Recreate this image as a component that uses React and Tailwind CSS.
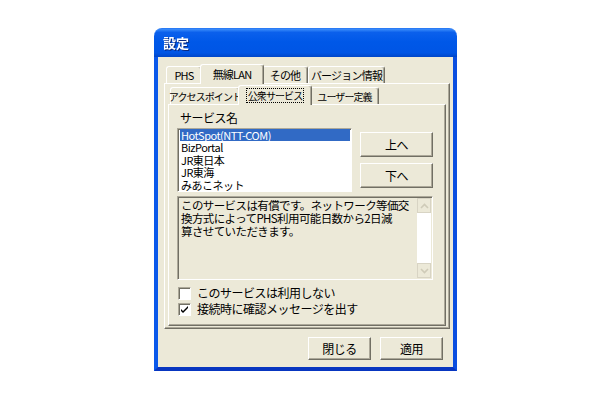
import React from 'react';

const jp = { fontFamily: '"MS UI Gothic", "Noto Sans CJK JP", "DejaVu Sans", sans-serif' };

function Tab({ label, selected, width, focus }) {
  if (selected) {
    return (
      <div
        className={`relative z-10 -mx-[2px] -mb-px h-[20px] ${width} flex items-center justify-center whitespace-nowrap bg-[#ECE9D8] border-t border-l border-white border-r border-r-[#716F64] rounded-t-[3px] shadow-[inset_-1px_0_0_#ACA899]`}
      >
        <span className={focus ? 'px-[1px] leading-[13px] outline-1 outline-dotted outline-black' : ''}>{label}</span>
      </div>
    );
  }
  return (
    <div
      className={`h-[17px] ${width} flex items-center justify-center whitespace-nowrap bg-[#ECE9D8] border-t border-l border-white border-r border-r-[#716F64] rounded-t-[3px] shadow-[inset_-1px_0_0_#ACA899]`}
    >
      {label}
    </div>
  );
}

function Button({ children, className }) {
  return (
    <div
      className={`flex items-center justify-center bg-[#ECE9D8] border border-t-white border-l-white border-r-[#716F64] border-b-[#716F64] shadow-[inset_-1px_-1px_0_#ACA899] ${className}`}
    >
      {children}
    </div>
  );
}

function Checkbox({ checked, label }) {
  return (
    <div className="flex items-center h-[16px]">
      <div className="w-[13px] h-[13px] bg-white border border-t-[#ACA899] border-l-[#ACA899] border-r-white border-b-white shadow-[inset_1px_1px_0_#716F64] flex items-center justify-center">
        {checked && (
          <svg width="9" height="9" viewBox="0 0 9 9">
            <path d="M1 4 L3 6 L8 1 L8 3 L3 8 L1 6 Z" fill="#000" />
          </svg>
        )}
      </div>
      <span className="ml-[6px] whitespace-nowrap">{label}</span>
    </div>
  );
}

function ScrollBtn({ up }) {
  return (
    <div className="w-[14px] h-[15px] bg-[#ECE9D8] border border-[#D8D4C4] flex items-center justify-center">
      <svg width="9" height="6" viewBox="0 0 9 6">
        <path d={up ? 'M1 5 L4.5 1.5 L8 5' : 'M1 1 L4.5 4.5 L8 1'} stroke="#CFCBB8" strokeWidth="1.6" fill="none" />
      </svg>
    </div>
  );
}

export default function App() {
  const items = ['HotSpot(NTT-COM)', 'BizPortal', 'JR東日本', 'JR東海', 'みあこネット'];

  return (
    <div className="w-[610px] h-[400px] bg-white pt-[28px] pl-[154px] text-[12px] text-black tracking-[-0.5px]" style={jp}>
      <div className="w-[303px] h-[343px] flex flex-col">
        {/* title bar */}
        <div className="h-[29px] rounded-t-[8px] bg-[linear-gradient(180deg,#3C8EFB_0%,#0B60EC_12%,#0058E8_45%,#0055E5_85%,#0046C8_100%)] border-t border-[#2A7BF5] flex items-center pl-[9px]">
          <span className="text-white font-bold text-[13px] tracking-normal drop-shadow-[1px_1px_0_#0A2A80]">設定</span>
        </div>

        {/* body */}
        <div className="flex-1 bg-[#ECE9D8] border-l-4 border-r-4 border-b-4 border-l-[#0A58EA] border-r-[#0A4EE0] border-b-[#0836C0] flex flex-col">
          {/* outer tab control */}
          <div className="pl-[6px] pt-[7px] pr-[3px]">
            <div className="flex items-end h-[19px] pl-[2px] text-[11px] tracking-[-0.8px]">
              <Tab label="PHS" width="w-[36px]" />
              <Tab label="無線LAN" width="w-[64px]" selected />
              <Tab label="その他" width="w-[46px]" />
              <Tab label="バージョン情報" width="w-[77px]" />
            </div>
            <div className="h-[246px] border-t border-l border-white border-r border-b border-r-[#716F64] border-b-[#716F64] shadow-[inset_-1px_-1px_0_#ACA899] pl-[3px] pr-[3px] pt-[2px]">
              {/* inner tab control */}
              <div className="flex items-end h-[18px] pl-[2px] text-[10px] tracking-[-0.9px]">
                <Tab label="アクセスポイント" width="w-[70px]" />
                <Tab label="公衆サービス" width="w-[74px]" selected focus />
                <Tab label="ユーザー定義" width="w-[69px]" />
              </div>
              <div className="h-[222px] border-t border-l border-white border-r border-b border-r-[#716F64] border-b-[#716F64] shadow-[inset_-1px_-1px_0_#ACA899] pl-[8px] pt-[6px]">
                <div className="pl-[3px] leading-[14px] h-[16px]">サービス名</div>
                <div className="flex mt-[1px]">
                  <div className="w-[175px] h-[64px] bg-white border border-t-[#ACA899] border-l-[#ACA899] border-r-white border-b-white shadow-[inset_1px_1px_0_#716F64] pl-[2px] pr-[1px] overflow-hidden text-[11px]">
                    {items.map((it, i) => (
                      <div
                        key={it}
                        className={`h-[12.4px] leading-[12.4px] pl-[1px] whitespace-nowrap ${i === 0 ? 'bg-[#316AC5] text-white' : ''}`}
                      >
                        {it}
                      </div>
                    ))}
                  </div>
                  <div className="ml-[8px] flex flex-col gap-[6px] pt-[4px]">
                    <Button className="w-[73px] h-[25px]">上へ</Button>
                    <Button className="w-[73px] h-[25px]">下へ</Button>
                  </div>
                </div>
                <div className="mt-[4px] w-[256px] h-[84px] border border-t-[#ACA899] border-l-[#ACA899] border-r-white border-b-white shadow-[inset_1px_1px_0_#716F64] flex">
                  <div className="flex-1 pl-[3px] pt-[2px] leading-[13px] whitespace-nowrap text-[11.5px] tracking-[-0.6px]">
                    このサービスは有償です。ネットワーク等価交
                    <br />
                    換方式によってPHS利用可能日数から2日減
                    <br />
                    算させていただきます。
                  </div>
                  <div className="w-[14px] flex flex-col bg-[#F8F7F2] mt-[1px] mr-[1px] mb-[1px]">
                    <ScrollBtn up />
                    <div className="flex-1 bg-white" />
                    <ScrollBtn />
                  </div>
                </div>
                <div className="mt-[5px] pl-[1px] flex flex-col">
                  <Checkbox label="このサービスは利用しない" />
                  <Checkbox checked label="接続時に確認メッセージを出す" />
                </div>
              </div>
            </div>
          </div>

          {/* bottom buttons */}
          <div className="flex justify-end gap-[9px] pr-[10px] mt-[8px]">
            <Button className="w-[63px] h-[23px]">閉じる</Button>
            <Button className="w-[63px] h-[23px]">適用</Button>
          </div>
        </div>
      </div>
    </div>
  );
}
